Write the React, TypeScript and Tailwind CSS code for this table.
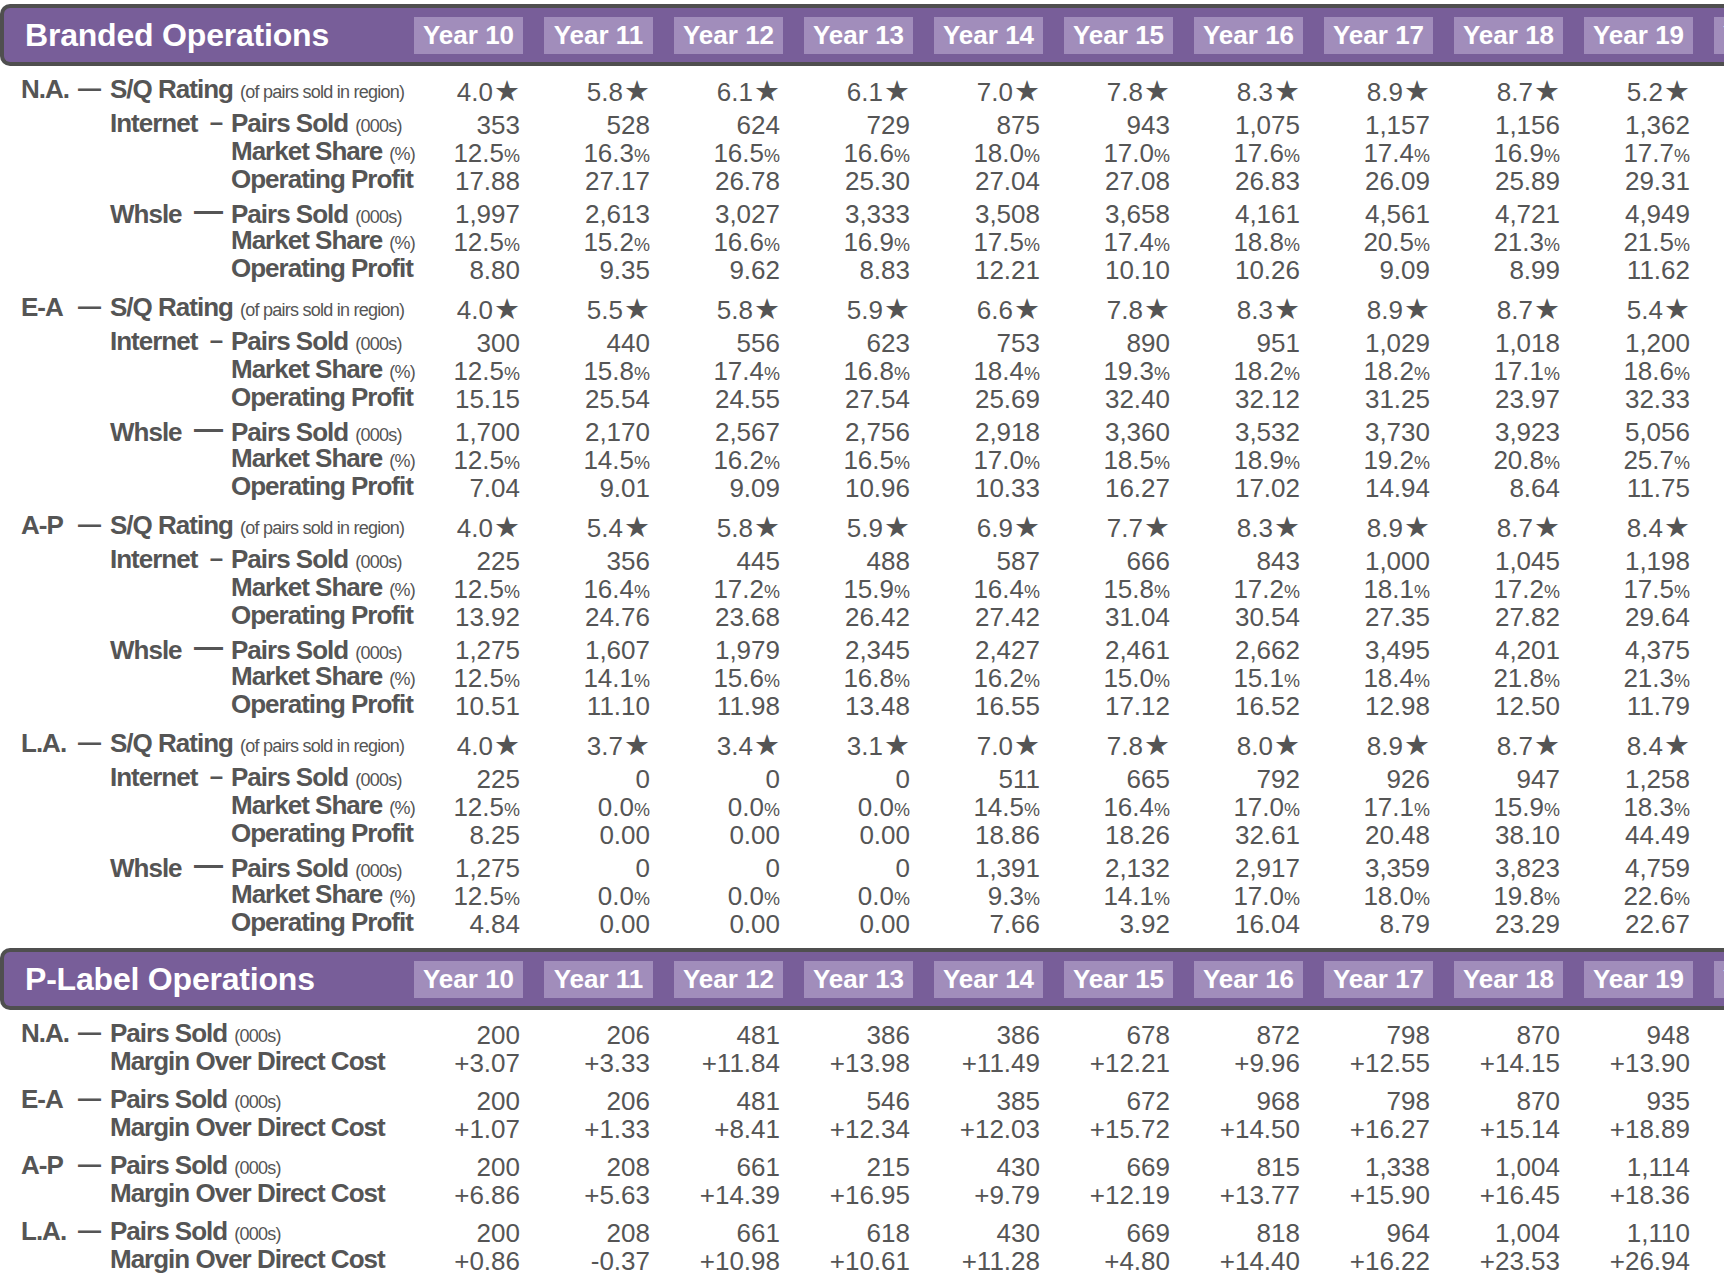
import React from 'react';

const YEARS = [10, 11, 12, 13, 14, 15, 16, 17, 18, 19, 20];

type Region = {
  name: string;
  sq: string[];
  internet: { ps: string[]; ms: string[]; op: string[] };
  whsle: { ps: string[]; ms: string[]; op: string[] };
};

const branded: Region[] = [
  {
    name: 'N.A.',
    sq: ['4.0', '5.8', '6.1', '6.1', '7.0', '7.8', '8.3', '8.9', '8.7', '5.2'],
    internet: {
      ps: ['353', '528', '624', '729', '875', '943', '1,075', '1,157', '1,156', '1,362'],
      ms: ['12.5', '16.3', '16.5', '16.6', '18.0', '17.0', '17.6', '17.4', '16.9', '17.7'],
      op: ['17.88', '27.17', '26.78', '25.30', '27.04', '27.08', '26.83', '26.09', '25.89', '29.31'],
    },
    whsle: {
      ps: ['1,997', '2,613', '3,027', '3,333', '3,508', '3,658', '4,161', '4,561', '4,721', '4,949'],
      ms: ['12.5', '15.2', '16.6', '16.9', '17.5', '17.4', '18.8', '20.5', '21.3', '21.5'],
      op: ['8.80', '9.35', '9.62', '8.83', '12.21', '10.10', '10.26', '9.09', '8.99', '11.62'],
    },
  },
  {
    name: 'E-A',
    sq: ['4.0', '5.5', '5.8', '5.9', '6.6', '7.8', '8.3', '8.9', '8.7', '5.4'],
    internet: {
      ps: ['300', '440', '556', '623', '753', '890', '951', '1,029', '1,018', '1,200'],
      ms: ['12.5', '15.8', '17.4', '16.8', '18.4', '19.3', '18.2', '18.2', '17.1', '18.6'],
      op: ['15.15', '25.54', '24.55', '27.54', '25.69', '32.40', '32.12', '31.25', '23.97', '32.33'],
    },
    whsle: {
      ps: ['1,700', '2,170', '2,567', '2,756', '2,918', '3,360', '3,532', '3,730', '3,923', '5,056'],
      ms: ['12.5', '14.5', '16.2', '16.5', '17.0', '18.5', '18.9', '19.2', '20.8', '25.7'],
      op: ['7.04', '9.01', '9.09', '10.96', '10.33', '16.27', '17.02', '14.94', '8.64', '11.75'],
    },
  },
  {
    name: 'A-P',
    sq: ['4.0', '5.4', '5.8', '5.9', '6.9', '7.7', '8.3', '8.9', '8.7', '8.4'],
    internet: {
      ps: ['225', '356', '445', '488', '587', '666', '843', '1,000', '1,045', '1,198'],
      ms: ['12.5', '16.4', '17.2', '15.9', '16.4', '15.8', '17.2', '18.1', '17.2', '17.5'],
      op: ['13.92', '24.76', '23.68', '26.42', '27.42', '31.04', '30.54', '27.35', '27.82', '29.64'],
    },
    whsle: {
      ps: ['1,275', '1,607', '1,979', '2,345', '2,427', '2,461', '2,662', '3,495', '4,201', '4,375'],
      ms: ['12.5', '14.1', '15.6', '16.8', '16.2', '15.0', '15.1', '18.4', '21.8', '21.3'],
      op: ['10.51', '11.10', '11.98', '13.48', '16.55', '17.12', '16.52', '12.98', '12.50', '11.79'],
    },
  },
  {
    name: 'L.A.',
    sq: ['4.0', '3.7', '3.4', '3.1', '7.0', '7.8', '8.0', '8.9', '8.7', '8.4'],
    internet: {
      ps: ['225', '0', '0', '0', '511', '665', '792', '926', '947', '1,258'],
      ms: ['12.5', '0.0', '0.0', '0.0', '14.5', '16.4', '17.0', '17.1', '15.9', '18.3'],
      op: ['8.25', '0.00', '0.00', '0.00', '18.86', '18.26', '32.61', '20.48', '38.10', '44.49'],
    },
    whsle: {
      ps: ['1,275', '0', '0', '0', '1,391', '2,132', '2,917', '3,359', '3,823', '4,759'],
      ms: ['12.5', '0.0', '0.0', '0.0', '9.3', '14.1', '17.0', '18.0', '19.8', '22.6'],
      op: ['4.84', '0.00', '0.00', '0.00', '7.66', '3.92', '16.04', '8.79', '23.29', '22.67'],
    },
  },
];

const pLabel = [
  {
    name: 'N.A.',
    ps: ['200', '206', '481', '386', '386', '678', '872', '798', '870', '948'],
    margin: ['+3.07', '+3.33', '+11.84', '+13.98', '+11.49', '+12.21', '+9.96', '+12.55', '+14.15', '+13.90'],
  },
  {
    name: 'E-A',
    ps: ['200', '206', '481', '546', '385', '672', '968', '798', '870', '935'],
    margin: ['+1.07', '+1.33', '+8.41', '+12.34', '+12.03', '+15.72', '+14.50', '+16.27', '+15.14', '+18.89'],
  },
  {
    name: 'A-P',
    ps: ['200', '208', '661', '215', '430', '669', '815', '1,338', '1,004', '1,114'],
    margin: ['+6.86', '+5.63', '+14.39', '+16.95', '+9.79', '+12.19', '+13.77', '+15.90', '+16.45', '+18.36'],
  },
  {
    name: 'L.A.',
    ps: ['200', '208', '661', '618', '430', '669', '818', '964', '1,004', '1,110'],
    margin: ['+0.86', '-0.37', '+10.98', '+10.61', '+11.28', '+4.80', '+14.40', '+16.22', '+23.53', '+26.94'],
  },
];

function SectionHeader({ title }: { title: string }) {
  return (
    <div className="flex h-[62px] items-center rounded-l-[10px] border-y-4 border-l-4 border-[#4f4f4f] bg-[#785e99]">
      <div className="w-[389px] shrink-0 pl-[21px] text-[32px] font-bold leading-none tracking-[-0.2px] text-white">
        {title}
      </div>
      {YEARS.map((y) => (
        <div
          key={y}
          className="ml-[21px] flex h-[37px] w-[109px] shrink-0 items-center justify-center bg-[#a18dbb] text-[26px] font-bold leading-none text-white"
        >
          Year {y}
        </div>
      ))}
    </div>
  );
}

// one table line: label on the left, ten right-aligned values
function Line({ label, values, kind }: { label: React.ReactNode; values: string[]; kind?: 'star' | 'pct' }) {
  return (
    <div className="flex h-[28px] items-center">
      <div className="w-[393px] shrink-0 whitespace-nowrap leading-[28px]">{label}</div>
      {values.map((v, i) => (
        <div key={i} className="w-[130px] shrink-0 whitespace-nowrap pr-[3px] text-right text-[26px] leading-[28px]">
          {v}
          {kind === 'star' && <span className="ml-[1px] font-['DejaVu_Sans'] text-[29px] leading-none">★</span>}
          {kind === 'pct' && <span className="text-[18px] leading-none">%</span>}
        </div>
      ))}
    </div>
  );
}

const bold = 'text-[26px] font-bold tracking-[-1px]';
const small = 'text-[18px] font-normal tracking-[-0.75px] leading-none';

function RegionHead({ name, children }: { name: string; children: React.ReactNode }) {
  return (
    <>
      <span className={`inline-block w-[78px] pl-[21px] ${bold}`}>{name}</span>
      <span className="inline-block w-[32px] align-[2px] text-[23px] leading-none font-bold">—</span>
      {children}
    </>
  );
}

function Metric({ name, unit, indent }: { name: string; unit?: string; indent?: number }) {
  return (
    <>
      {indent === 231 && <span className="inline-block w-[231px]" />}
      {indent === 110 && <span className="inline-block w-[110px]" />}
      <span className={bold}>{name}</span>
      {unit && <span className={`ml-[7px] ${small}`}>{unit}</span>}
    </>
  );
}

function Channel({ name, dash, ch }: { name: string; dash: string; ch: Region['internet'] }) {
  return (
    <div>
      <Line
        label={
          <>
            <span className="inline-block w-[110px]" />
            <span className={`inline-block w-[84px] ${bold}`}>{name}</span>
            <span
              className={`inline-block w-[37px] pr-[8px] text-right align-[2px] font-bold leading-none ${
                dash === '—' ? 'text-[29px]' : 'text-[24px]'
              }`}
            >
              {dash}
            </span>
            <Metric name="Pairs Sold" unit="(000s)" />
          </>
        }
        values={ch.ps}
      />
      <Line label={<Metric name="Market Share" unit="(%)" indent={231} />} values={ch.ms} kind="pct" />
      <Line label={<Metric name="Operating Profit" indent={231} />} values={ch.op} />
    </div>
  );
}

export default function App() {
  return (
    <div className="w-full overflow-hidden bg-white font-['Liberation_Sans',Arial,sans-serif] text-[#555555]">
      <div className="w-[1830px] pt-[4px]">
        {/* Branded */}
        <SectionHeader title="Branded Operations" />
        {branded.map((r) => (
          <div key={r.name} className="mt-[11px]">
            <Line
              label={
                <RegionHead name={r.name}>
                  <Metric name="S/Q Rating" unit="(of pairs sold in region)" />
                </RegionHead>
              }
              values={r.sq}
              kind="star"
            />
            <div className="mt-[6px]">
              <Channel name="Internet" dash="–" ch={r.internet} />
            </div>
            <div className="mt-[5px]">
              <Channel name="Whsle" dash="—" ch={r.whsle} />
            </div>
          </div>
        ))}

        {/* P-Label */}
        <div className="mt-[10px]">
          <SectionHeader title="P-Label Operations" />
        </div>
        {pLabel.map((r, i) => (
          <div key={r.name} className={i === 0 ? 'mt-[11px]' : 'mt-[10px]'}>
            <Line
              label={
                <RegionHead name={r.name}>
                  <Metric name="Pairs Sold" unit="(000s)" />
                </RegionHead>
              }
              values={r.ps}
            />
            <Line label={<Metric name="Margin Over Direct Cost" indent={110} />} values={r.margin} />
          </div>
        ))}
      </div>
    </div>
  );
}
